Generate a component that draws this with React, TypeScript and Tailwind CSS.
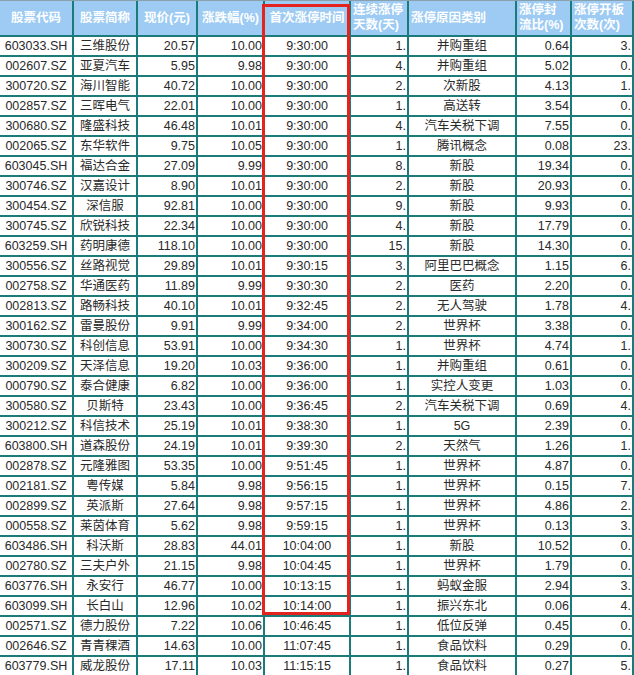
import type { ReactNode } from "react";

type Row = [string, string, string, string, string, string, string, string, string];

const ROWS: Row[] = [
  ["603033.SH", "三维股份", "20.57", "10.00", "9:30:00", "1.", "并购重组", "0.64", "3."],
  ["002607.SZ", "亚夏汽车", "5.95", "9.98", "9:30:00", "4.", "并购重组", "5.02", "0."],
  ["300720.SZ", "海川智能", "40.72", "10.00", "9:30:00", "2.", "次新股", "4.13", "1."],
  ["002857.SZ", "三晖电气", "22.01", "10.00", "9:30:00", "1.", "高送转", "3.54", "0."],
  ["300680.SZ", "隆盛科技", "46.48", "10.01", "9:30:00", "4.", "汽车关税下调", "7.55", "0."],
  ["002065.SZ", "东华软件", "9.75", "10.05", "9:30:00", "1.", "腾讯概念", "0.08", "23."],
  ["603045.SH", "福达合金", "27.09", "9.99", "9:30:00", "8.", "新股", "19.34", "0."],
  ["300746.SZ", "汉嘉设计", "8.90", "10.01", "9:30:00", "2.", "新股", "20.93", "0."],
  ["300454.SZ", "深信服", "92.81", "10.00", "9:30:00", "9.", "新股", "9.93", "0."],
  ["300745.SZ", "欣锐科技", "22.34", "10.00", "9:30:00", "4.", "新股", "17.79", "0."],
  ["603259.SH", "药明康德", "118.10", "10.00", "9:30:00", "15.", "新股", "14.30", "0."],
  ["300556.SZ", "丝路视觉", "29.89", "10.01", "9:30:15", "3.", "阿里巴巴概念", "1.15", "6."],
  ["002758.SZ", "华通医药", "11.89", "9.99", "9:30:30", "2.", "医药", "2.20", "0."],
  ["002813.SZ", "路畅科技", "40.10", "10.01", "9:32:45", "2.", "无人驾驶", "1.78", "4."],
  ["300162.SZ", "雷曼股份", "9.91", "9.99", "9:34:00", "2.", "世界杯", "3.38", "0."],
  ["300730.SZ", "科创信息", "53.91", "10.00", "9:34:30", "1.", "世界杯", "4.74", "1."],
  ["300209.SZ", "天泽信息", "19.20", "10.03", "9:36:00", "1.", "并购重组", "0.61", "0."],
  ["000790.SZ", "泰合健康", "6.82", "10.00", "9:36:00", "1.", "实控人变更", "1.03", "0."],
  ["300580.SZ", "贝斯特", "23.43", "10.00", "9:36:45", "2.", "汽车关税下调", "0.69", "4."],
  ["300212.SZ", "科信技术", "25.19", "10.01", "9:38:30", "1.", "5G", "2.39", "0."],
  ["603800.SH", "道森股份", "24.19", "10.01", "9:39:30", "2.", "天然气", "1.26", "1."],
  ["002878.SZ", "元隆雅图", "53.35", "10.00", "9:51:45", "1.", "世界杯", "4.87", "0."],
  ["002181.SZ", "粤传媒", "5.84", "9.98", "9:56:15", "1.", "世界杯", "0.15", "7."],
  ["002899.SZ", "英派斯", "27.64", "9.98", "9:57:15", "1.", "世界杯", "4.86", "2."],
  ["000558.SZ", "莱茵体育", "5.62", "9.98", "9:59:15", "1.", "世界杯", "0.13", "3."],
  ["603486.SH", "科沃斯", "28.83", "44.01", "10:04:00", "1.", "新股", "10.52", "0."],
  ["002780.SZ", "三夫户外", "21.15", "9.98", "10:04:45", "1.", "世界杯", "1.79", "0."],
  ["603776.SH", "永安行", "46.77", "10.00", "10:13:15", "1.", "蚂蚁金服", "2.94", "3."],
  ["603099.SH", "长白山", "12.96", "10.02", "10:14:00", "1.", "振兴东北", "0.06", "4."],
  ["002571.SZ", "德力股份", "7.22", "10.06", "10:46:45", "1.", "低位反弹", "0.45", "0."],
  ["002646.SZ", "青青稞酒", "14.63", "10.00", "11:07:45", "1.", "食品饮料", "0.29", "0."],
  ["603779.SH", "威龙股份", "17.11", "10.03", "11:15:15", "1.", "食品饮料", "0.27", "5."],
];

// alignment per column
const ALIGN = [
  "justify-center",
  "justify-center",
  "justify-end pr-[1px]",
  "justify-end pr-[1px]",
  "justify-center",
  "justify-end pr-[1px]",
  "justify-center",
  "justify-end pr-[1px]",
  "justify-end pr-[1px]",
];

function HeadCell({ children, left = false }: { children: ReactNode; left?: boolean }) {
  return (
    <div
      className={`flex h-[34px] items-center bg-[#9dcbf3] px-[2px] text-[12.5px] font-bold leading-[15px] text-white ${
        left ? "justify-start" : "justify-center text-center"
      }`}
    >
      <div>{children}</div>
    </div>
  );
}

export default function App() {
  return (
    <div
      className="relative h-[675px] w-[634px] overflow-hidden bg-white"
      style={{ fontFamily: '"Liberation Sans", Arial, "Noto Sans CJK SC", sans-serif' }}
    >
      <div className="border-t border-[#8aa0aa] bg-[#1b7b7b] pr-[2px]">
        <div className="grid grid-cols-[72px_62px_58px_65px_84px_56px_106px_53px_60px] gap-[2px]">
          <HeadCell>股票代码</HeadCell>
          <HeadCell>股票简称</HeadCell>
          <HeadCell>现价(元)</HeadCell>
          <HeadCell>涨跌幅(%)</HeadCell>
          <HeadCell>首次涨停时间</HeadCell>
          <HeadCell left>
            连续涨停
            <br />
            天数(天)
          </HeadCell>
          <HeadCell left>涨停原因类别</HeadCell>
          <HeadCell left>
            涨停封
            <br />
            流比(%)
          </HeadCell>
          <HeadCell left>
            涨停开板
            <br />
            次数(次)
          </HeadCell>
          {ROWS.map((row, i) =>
            row.map((v, j) => (
              <div
                key={`${i}-${j}`}
                className={`flex h-[18px] items-center overflow-hidden whitespace-nowrap bg-white text-[12.5px] leading-none text-[#2a2a2a] ${ALIGN[j]}`}
              >
                {v}
              </div>
            ))
          )}
        </div>
      </div>
      {/* highlight box over the first limit-up time column */}
      <div className="pointer-events-none absolute left-[262px] top-[4px] h-[611px] w-[88px] border-[3px] border-[#e3231d]" />
    </div>
  );
}
